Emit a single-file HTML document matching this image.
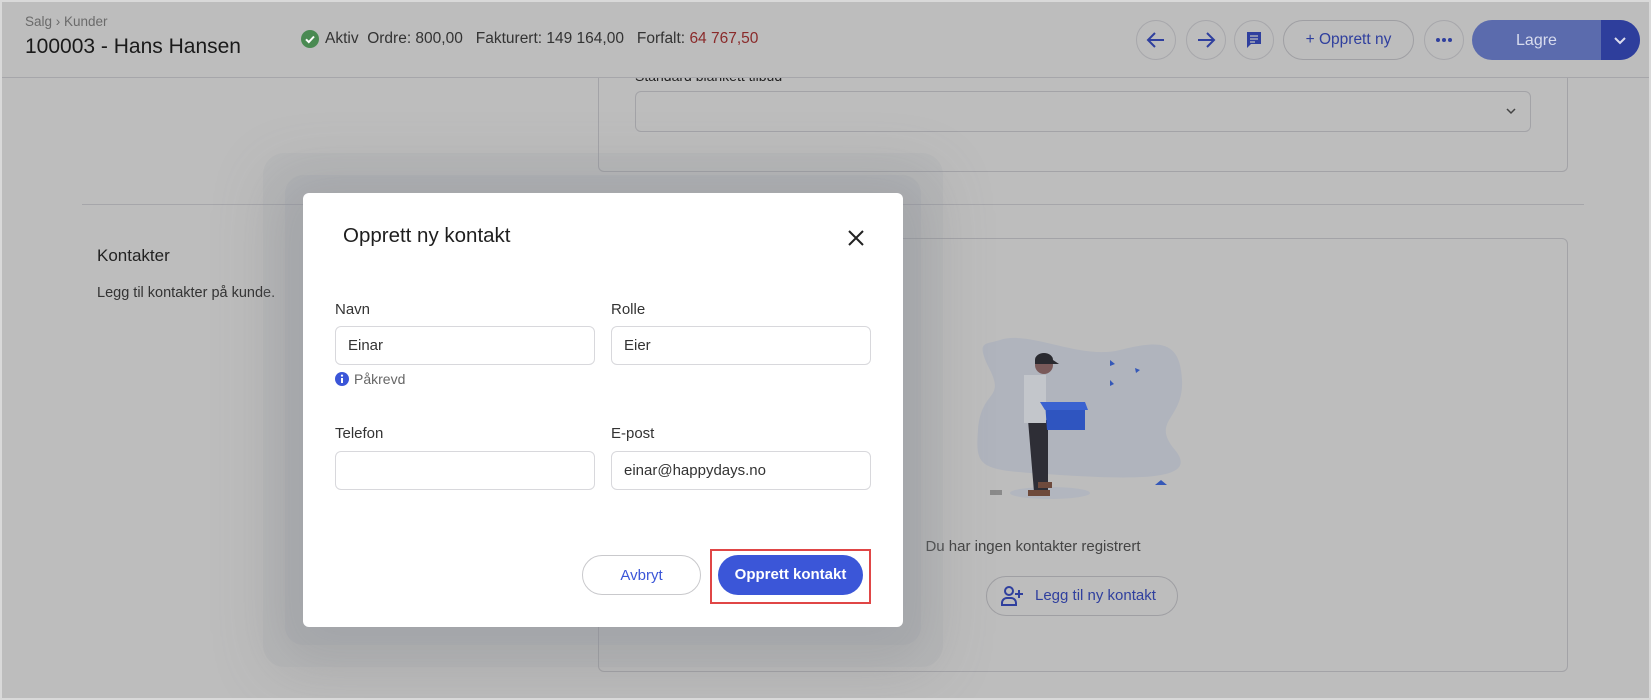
<!DOCTYPE html>
<html><head><meta charset="utf-8"><style>
*{box-sizing:border-box;margin:0;padding:0}
body{width:1651px;height:700px;overflow:hidden;background:#bdbdbd;font-family:"Liberation Sans",sans-serif;position:relative;color:#1e1e1e}
.a{position:absolute}
.frame{left:0;top:0;width:1651px;height:700px;border:2px solid #d9d9d9;border-top-width:2px}
.cb{border:1px solid #9f9fa3;border-radius:20px;background:transparent}
.circ{width:40px;height:40px;border-radius:50%;border:1px solid #a7a7ab;top:20px}
.card{border:1px solid #a3a3a7;border-radius:6px}
.modal{left:303px;top:193px;width:600px;height:434px;background:#fff;border-radius:6px;box-shadow:0 0 0 18px rgba(150,155,165,.18),0 0 0 40px rgba(150,155,165,.12),0 12px 60px 30px rgba(110,110,115,.25)}
.lbl{font-size:15px;color:#333}
.inp{width:260px;height:39px;border:1px solid #d8d8dc;border-radius:6px;font-size:15px;color:#333;padding:10px 0 0 12px}
</style></head><body>
<div class="a card" style="left:598px;top:60px;width:970px;height:112px;border-top:none;border-radius:0 0 6px 6px"></div>
<div class="a" style="left:635px;top:68px;font-size:14px;color:#222">Standard blankett tilbud</div>
<div class="a" style="left:0;top:0;width:1651px;height:78px;background:#bdbdbd;border-bottom:1px solid #a6a6aa"></div>
<div class="a" style="left:25px;top:14px;font-size:13.5px;color:#6a6a6a">Salg › Kunder</div>
<div class="a" style="left:25px;top:35px;font-size:21px;color:#1a1a1a">100003 - Hans Hansen</div>
<svg class="a" style="left:301px;top:30px" width="18" height="18" viewBox="0 0 18 18"><circle cx="9" cy="9" r="9" fill="#4a8a52"/><path d="M5 9.3l2.8 2.8L13 6.5" stroke="#fff" stroke-width="2" fill="none"/></svg>
<div class="a" style="left:325px;top:30px;font-size:15.5px;color:#333;white-space:pre">Aktiv  Ordre: 800,00   Fakturert: 149 164,00   Forfalt: <span style="color:#8a2a2a">64 767,50</span></div>
<div class="a circ" style="left:1136px"><svg width="38" height="38" viewBox="0 0 38 38"><path d="M27 19H12M18 12l-7 7 7 7" stroke="#2f3f9e" stroke-width="2" fill="none"/></svg></div>
<div class="a circ" style="left:1186px"><svg width="38" height="38" viewBox="0 0 38 38"><path d="M11 19h15M20 12l7 7-7 7" stroke="#2f3f9e" stroke-width="2" fill="none"/></svg></div>
<div class="a circ" style="left:1234px"><svg width="38" height="38" viewBox="0 0 38 38"><path d="M12 11h14v12H16l-4 4z" fill="#2f3f9e"/><path d="M15 15h8M15 18h8M15 21h5" stroke="#bfbfbf" stroke-width="1.3"/></svg></div>
<div class="a cb" style="left:1283px;top:20px;width:131px;height:40px;color:#2f3f9e;font-size:15.5px;padding-top:10px;text-align:center">+ Opprett ny</div>
<div class="a circ" style="left:1424px"><svg width="38" height="38"><circle cx="13" cy="19" r="2" fill="#2f3f9e"/><circle cx="19" cy="19" r="2" fill="#2f3f9e"/><circle cx="25" cy="19" r="2" fill="#2f3f9e"/></svg></div>
<div class="a" style="left:1472px;top:20px;width:168px;height:40px;border-radius:20px;background:#5b6bad;overflow:hidden"><div class="a" style="left:129px;top:0;width:39px;height:40px;background:#2e3e9c"></div><div class="a" style="left:0;top:12px;width:129px;text-align:center;color:#d8dcee;font-size:16px">Lagre</div><svg class="a" style="left:140px;top:12px" width="16" height="16"><path d="M3 6l5 5 5-5" stroke="#dde" stroke-width="2" fill="none"/></svg></div>
<div class="a" style="left:635px;top:91px;width:896px;height:41px;border:1px solid #a3a3a7;border-radius:6px"><svg class="a" style="right:12px;top:12px" width="14" height="14"><path d="M3 5l4 4 4-4" stroke="#444" stroke-width="1.5" fill="none"/></svg></div>
<div class="a" style="left:82px;top:204px;width:1502px;border-top:1px solid #a6a6aa"></div>
<div class="a" style="left:97px;top:246px;font-size:17px;color:#222">Kontakter</div>
<div class="a" style="left:97px;top:285px;font-size:14.5px;color:#333">Legg til kontakter på kunde.</div>
<div class="a card" style="left:598px;top:238px;width:970px;height:434px"></div>
<svg class="a" style="left:960px;top:310px" width="250" height="200" viewBox="0 0 250 200">
<path d="M40 30C70 20 120 50 160 40S220 30 222 70 190 110 215 140 180 170 100 165 15 160 18 120 45 90 30 60 25 35 40 30z" fill="#b0b4bd"/>
<ellipse cx="90" cy="183" rx="40" ry="6" fill="#b2b6bf"/>
<path d="M68 110h20v72h-14z" fill="#2e2e36"/>
<path d="M64 65h22v48H64z" fill="#c3c6cb"/>
<circle cx="84" cy="55" r="9" fill="#7a5a5a"/><path d="M75 50a9 7 0 0 1 18 0l6 4h-24z" fill="#2a2a30"/>
<path d="M68 180h22v6H68zM78 172h14v6H78z" fill="#6e4a3c"/>
<path d="M85 92h40v28H87z" fill="#2f55c0"/><path d="M80 92l45 0 3 8H85z" fill="#3a62d0"/>
<path d="M150 50l5 4-5 2zM175 58l5 2-4 3zM150 70l4 4-4 2z" fill="#3558b8"/>
<path d="M195 175l6-5 6 5z" fill="#3558b8"/><path d="M30 180h12v5H30z" fill="#8a8a8a"/>
</svg>
<div class="a" style="left:900px;top:538px;width:266px;text-align:center;font-size:15px;color:#444">Du har ingen kontakter registrert</div>
<div class="a cb" style="left:986px;top:576px;width:192px;height:40px;color:#2f3f9e;font-size:15px;padding:10px 0 0 48px">Legg til ny kontakt</div>
<svg class="a" style="left:1000px;top:585px" width="24" height="22" viewBox="0 0 24 22"><circle cx="9" cy="6" r="4" stroke="#2f3f9e" stroke-width="2" fill="none"/><path d="M2 20v-2a5 5 0 0 1 5-5h4a5 5 0 0 1 5 5v2z" stroke="#2f3f9e" stroke-width="2" fill="none"/><path d="M19 5v8M15 9h8" stroke="#2f3f9e" stroke-width="2"/></svg>
<div class="a modal">
<div class="a" style="left:40px;top:31px;font-size:20.5px;color:#1e1e1e">Opprett ny kontakt</div>
<svg class="a" style="left:544px;top:36px" width="18" height="18"><path d="M2 2l14 14M16 2L2 16" stroke="#222" stroke-width="2"/></svg>
<div class="a lbl" style="left:32px;top:108px">Navn</div>
<div class="a lbl" style="left:308px;top:108px">Rolle</div>
<div class="a inp" style="left:32px;top:133px">Einar</div>
<div class="a inp" style="left:308px;top:133px">Eier</div>
<svg class="a" style="left:32px;top:179px" width="14" height="14"><circle cx="7" cy="7" r="7" fill="#3b56d8"/><path d="M7 6v5" stroke="#fff" stroke-width="2"/><circle cx="7" cy="3.6" r="1.1" fill="#fff"/></svg>
<div class="a" style="left:51px;top:178px;font-size:14px;color:#666">Påkrevd</div>
<div class="a lbl" style="left:32px;top:232px">Telefon</div>
<div class="a lbl" style="left:308px;top:232px">E-post</div>
<div class="a inp" style="left:32px;top:258px"></div>
<div class="a inp" style="left:308px;top:258px">einar@happydays.no</div>
<div class="a" style="left:279px;top:362px;width:119px;height:40px;border:1px solid #c9c9cc;border-radius:20px;text-align:center;padding-top:11px;color:#3b56d8;font-size:15px">Avbryt</div>
<div class="a" style="left:407px;top:356px;width:161px;height:55px;border:2px solid #e04646"></div>
<div class="a" style="left:415px;top:362px;width:145px;height:40px;border-radius:20px;background:#3b56d8;color:#fff;text-align:center;padding-top:11px;font-size:15px;font-weight:bold">Opprett kontakt</div>
</div>
<div class="a frame"></div>
</body></html>
